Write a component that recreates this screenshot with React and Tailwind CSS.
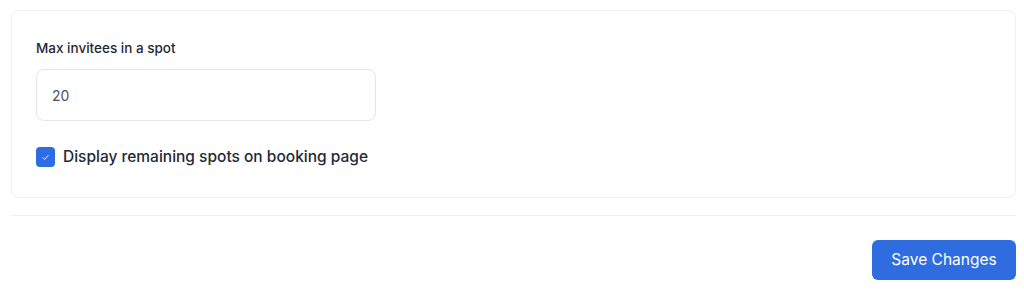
export default function App() {
  return (
    <div className="min-h-screen bg-white pl-[11px] pr-[8px] pt-[10px] font-['Inter',_sans-serif]">
      <div className="rounded-lg border border-[#eeeff1] px-[24px] pt-[28px] pb-[28px]">
        <label className="block text-[13.5px] leading-[18px] font-medium text-[#1f2937]">
          Max invitees in a spot
        </label>
        <input
          type="text"
          defaultValue="20"
          className="mt-[12px] block h-[52px] w-[340px] rounded-lg border border-[#e3e5e9] px-[15px] text-[14px] text-[#4b5563] outline-none"
        />
        <label className="mt-[24px] flex h-[24px] items-center gap-[8px]">
          <span className="flex h-[20px] w-[19px] items-center justify-center rounded-[4px] bg-[#2f6ce0]">
            <svg width="9" height="9" viewBox="0 0 10 10" fill="none">
              <path d="M2 5.2l2 2 4-4.4" stroke="white" strokeWidth="1" strokeLinecap="round" strokeLinejoin="round" />
            </svg>
          </span>
          <span className="text-[15.5px] font-medium text-[#1f2937]">
            Display remaining spots on booking page
          </span>
        </label>
      </div>
      <div className="mt-[17px] border-t border-[#eeeff1]" />
      <div className="mt-[24px] flex justify-end">
        <button className="h-[40px] w-[144px] rounded-md bg-[#2f6ce0] text-[15.5px] font-normal text-white">
          Save Changes
        </button>
      </div>
    </div>
  );
}
